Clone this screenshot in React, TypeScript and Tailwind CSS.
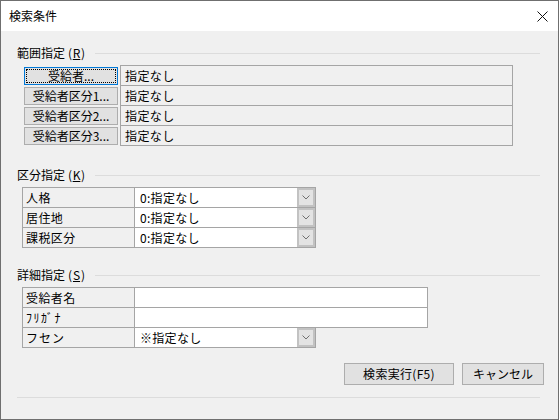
import React from "react";

const F = "font-['Noto_Sans_CJK_JP','Noto_Sans',sans-serif]";

function Chevron() {
  return (
    <svg width="8" height="5" viewBox="0 0 8 5" className="block">
      <path d="M0.5 0.5 L4 4 L7.5 0.5" fill="none" stroke="#707070" strokeWidth="1" />
    </svg>
  );
}

function Heading({ label, k }: { label: string; k: string }) {
  return (
    <div className="flex h-[16px] items-center leading-[16px] mr-[4px]">
      <span className="flex whitespace-nowrap text-[12px] text-black">
        <span>{label}</span>
        <span className="inline-block w-[7px] text-right">(</span>
        <span className="inline-block w-[9px] text-center underline">{k}</span>
        <span className="inline-block w-[7px] text-left">)</span>
      </span>
      <div className="ml-[7px] h-px flex-1 bg-[#dcdcdc]" />
    </div>
  );
}

function Select({ value, w }: { value: string; w: string }) {
  return (
    <div className={`-ml-px flex h-[21px] items-center border border-[#a5a5a5] bg-white ${w}`}>
      <span className="flex-1 pl-[5px] text-[12px] leading-[16px] tracking-[0.3px]">{value}</span>
      <div className="flex h-full w-[18px] items-center justify-center border-2 border-[#c2c2c2] bg-[#e3e3e3]">
        <Chevron />
      </div>
    </div>
  );
}

export default function App() {
  const r1 = ["受給者...", "受給者区分1...", "受給者区分2...", "受給者区分3..."];
  const r2 = ["人格", "居住地", "課税区分"];
  return (
    <div className={`${F} flex h-[420px] w-[559px] flex-col border border-[#6f6f6f] bg-white text-black`}>
      <div className="flex h-[30px] items-center justify-between bg-white pl-[8px] pr-[10px]">
        <span className="text-[12px] leading-[16px]">検索条件</span>
        <svg width="11" height="11" viewBox="0 0 11 11">
          <path d="M0.5 0.5 L10.5 10.5 M10.5 0.5 L0.5 10.5" stroke="#111" strokeWidth="1" />
        </svg>
      </div>
      <div className="flex flex-1 flex-col bg-[#f0f0f0] pl-[16px] pr-[14px] pt-[14px]">
        <Heading label="範囲指定" k="R" />
        <div className="ml-[7px] mt-[4px] flex flex-col">
          {r1.map((t, i) => (
            <div key={t} className={`flex h-[21px] ${i > 0 ? "-mt-px" : ""}`}>
              <div className="flex w-[96px] items-center">
                <div
                  className={`relative flex h-[18px] w-[94px] items-center justify-center border bg-[#e1e1e1] text-[12px] leading-[16px] whitespace-nowrap ${
                    i === 0 ? "border-[#0078d7]" : "border-[#adadad]"
                  }`}
                >
                  {i === 0 && (
                    <div className="absolute inset-[1px] border border-dotted border-black" />
                  )}
                  <span className="relative">{t}</span>
                </div>
              </div>
              <div className="flex w-[393px] items-center border border-[#a5a5a5] pl-[4px] text-[12px] leading-[16px] tracking-[0.4px]">
                指定なし
              </div>
            </div>
          ))}
        </div>

        <div className="mt-[21px]">
          <Heading label="区分指定" k="K" />
        </div>
        <div className="ml-[5px] mt-[4px] flex flex-col">
          {r2.map((t, i) => (
            <div key={t} className={`flex ${i > 0 ? "-mt-px" : ""}`}>
              <div className="flex h-[21px] w-[113px] items-center border border-[#a5a5a5] pl-[3px] text-[12px] leading-[16px] tracking-[0.4px]">
                {t}
              </div>
              <Select value="0:指定なし" w="w-[182px]" />
            </div>
          ))}
        </div>

        <div className="mt-[19px]">
          <Heading label="詳細指定" k="S" />
        </div>
        <div className="ml-[5px] mt-[4px] flex flex-col">
          {["受給者名", "ﾌﾘｶﾞﾅ"].map((t, i) => (
            <div key={t} className={`flex ${i > 0 ? "-mt-px" : ""}`}>
              <div
                className={`flex h-[21px] w-[113px] items-center border border-[#a5a5a5] pl-[3px] text-[12px] leading-[16px] ${
                  i === 1 ? "tracking-[1.5px]" : "tracking-[0.4px]"
                }`}
              >
                {t}
              </div>
              <div className="-ml-px h-[21px] w-[294px] border border-[#a5a5a5] bg-white" />
            </div>
          ))}
          <div className="-mt-px flex">
            <div className="flex h-[21px] w-[113px] items-center border border-[#a5a5a5] pl-[3px] text-[12px] leading-[16px] tracking-[1px]">
              フセン
            </div>
            <Select value="※指定なし" w="w-[182px]" />
          </div>
        </div>

        <div className="mt-[15px] flex justify-end gap-[8px]">
          <div className="flex h-[22px] w-[110px] items-center justify-center border border-[#adadad] bg-[#e1e1e1] text-[12px] leading-[16px] tracking-[0.3px]">
            検索実行(F5)
          </div>
          <div className="flex h-[22px] w-[82px] items-center justify-center border border-[#adadad] bg-[#e1e1e1] text-[12px] leading-[16px]">
            キャンセル
          </div>
        </div>
        <div className="mr-[4px] mt-[12px] h-px bg-[#dcdcdc]" />
      </div>
    </div>
  );
}
